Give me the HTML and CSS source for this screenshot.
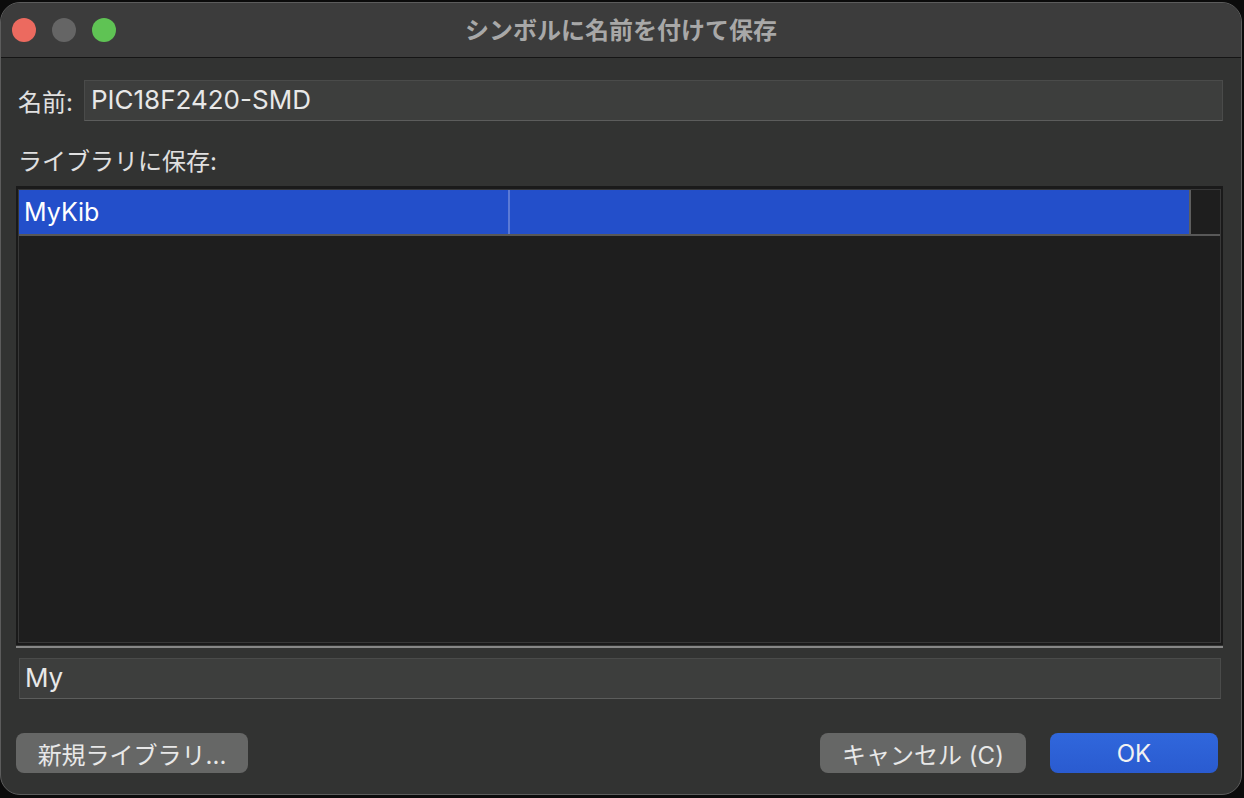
FILE: index.html
```html
<!DOCTYPE html>
<html lang="ja">
<head>
    <meta charset="UTF-8">
    <meta name="viewport" content="width=device-width, initial-scale=1.0">
    <title>シンボルに名前を付けて保存</title>
    <link rel="stylesheet" href="styles.css">
</head>
<body>

<div class="window">
    <div class="titlebar">
        <div class="lights">
            <span class="light red"></span>
            <span class="light gray"></span>
            <span class="light green"></span>
        </div>
        <div class="title">シンボルに名前を付けて保存</div>
    </div>

    <div class="content">
        <div class="name-row">
            <label class="label">名前:</label>
            <div class="field name-field">PIC18F2420-SMD</div>
        </div>

        <div class="label lib-label">ライブラリに保存:</div>

        <div class="list">
            <div class="list-inner">
                <div class="row selected">
                    <div class="cell cell-name">MyKib</div>
                    <div class="cell cell-path"></div>
                    <div class="cell cell-end"></div>
                </div>
            </div>
        </div>
        <div class="splitter"></div>

        <div class="field filter-field">My</div>

        <div class="buttons">
            <button class="btn">新規ライブラリ...</button>
            <div class="spacer"></div>
            <button class="btn btn-cancel">キャンセル (C)</button>
            <button class="btn btn-ok">OK</button>
        </div>
    </div>
</div>

</body>
</html>
```

FILE: styles.css
```css
body {
    margin: 0;
    background: #0b0b0b;
    font-family: "Inter", "Noto Sans CJK JP", sans-serif;
    color: #e6e6e6;
}
.window {
    margin-top: 2px;
    width: 1242px;
    height: 793px;
    box-sizing: border-box;
    border: 1px solid #5c5c5c;
    border-radius: 20px;
    background: #323332;
    overflow: hidden;
    display: flex;
    flex-direction: column;
}
.titlebar {
    height: 54px;
    flex: none;
    background: #3c3c3c;
    border-bottom: 1px solid #151515;
    display: flex;
    align-items: center;
    position: relative;
}
.lights {
    display: flex;
    gap: 16px;
    padding-left: 11px;
}
.light {
    width: 24px;
    height: 24px;
    border-radius: 50%;
}
.light.red { background: #ec6a5f; }
.light.gray { background: #656565; }
.light.green { background: #5fc354; }
.title {
    position: absolute;
    left: 0;
    right: 0;
    top: 0;
    bottom: 3px;
    display: flex;
    align-items: center;
    justify-content: center;
    font-size: 24px;
    font-weight: bold;
    color: #a8a8a8;
    pointer-events: none;
}
.content {
    flex: 1;
    padding: 22px 18px 0 15px;
    display: flex;
    flex-direction: column;
}
.label {
    font-size: 24px;
    color: #e0e0e0;
}
.name-row {
    display: flex;
    align-items: center;
    gap: 11px;
}
.name-row .label {
    padding-left: 2px;
}
.field {
    height: 41px;
    box-sizing: border-box;
    background: #3d3e3d;
    border: 1px solid #4a4b4a;
    border-bottom-color: #5c5d5c;
    font-size: 26px;
    line-height: 38px;
    padding-left: 6px;
    color: #e8e8e8;
}
.name-field {
    flex: 1;
}
.lib-label {
    margin-top: 21px;
    padding-left: 2px;
    line-height: 40px;
}
.list {
    margin-top: 4px;
    height: 459px;
    box-sizing: border-box;
    border: 2px solid #1a1a1a;
    border-top-width: 3px;
}
.list-inner {
    height: 100%;
    box-sizing: border-box;
    border: 1px solid #383838;
    background: #1e1e1e;
}
.row {
    display: flex;
    height: 46px;
    box-sizing: border-box;
    border-bottom: 2px solid #585858;
}
.row.selected .cell-name,
.row.selected .cell-path {
    background: #234fca;
}
.cell {
    font-size: 25px;
    line-height: 44px;
    color: #ffffff;
}
.cell-name {
    width: 484px;
    padding-left: 5px;
    border-right: 2px solid #5b7ad6;
}
.cell-path {
    flex: 1;
    border-right: 2px solid #5e5e5e;
}
.cell-end {
    width: 29px;
}
.splitter {
    margin-top: 1px;
    height: 2px;
    background: #878787;
}
.filter-field {
    margin: 10px 2px 0 3px;
    padding-left: 5px;
}
.buttons {
    display: flex;
    gap: 24px;
    margin-top: 34px;
    padding-right: 5px;
}
.spacer {
    flex: 1;
}
.btn {
    height: 40px;
    border: none;
    border-radius: 8px;
    background: #666766;
    color: #e8e8e8;
    font-family: "Inter", "Noto Sans CJK JP", sans-serif;
    font-size: 24px;
    padding: 0;
}
.btn:first-child {
    width: 232px;
}
.btn-cancel {
    width: 206px;
}
.btn-ok {
    width: 168px;
    background: linear-gradient(to bottom, #3067dc, #2a5bd0);
    color: #f2f2f2;
}
```
